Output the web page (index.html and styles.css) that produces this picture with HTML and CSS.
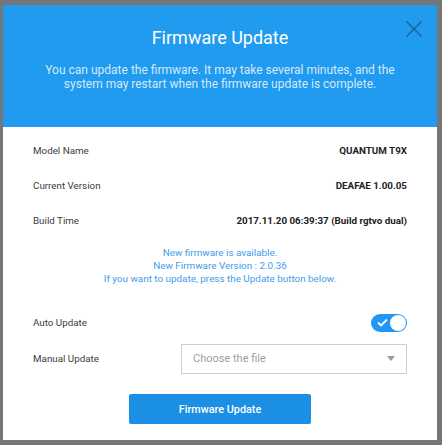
FILE: index.html
```html
<!DOCTYPE html>
<html>
<head>
<meta charset="utf-8">
<link rel="stylesheet" href="styles.css">
</head>
<body>
<div class="backdrop">
  <div class="modal">
    <div class="modal-header">
      <button class="close" aria-label="Close">
        <svg width="16" height="16" viewBox="0 0 16 16"><path d="M0.5 0.5L15.5 15.5M15.5 0.5L0.5 15.5" stroke="#1d5d8f" stroke-width="1.2" fill="none"/></svg>
      </button>
      <h1 class="title">Firmware Update</h1>
      <p class="subtitle">You can update the firmware. It may take several minutes, and the<br>system may restart when the firmware update is complete.</p>
    </div>
    <div class="modal-body">
      <div class="row"><span class="label">Model Name</span><span class="value">QUANTUM T9X</span></div>
      <div class="row"><span class="label">Current Version</span><span class="value">DEAFAE 1.00.05</span></div>
      <div class="row"><span class="label">Build Time</span><span class="value">2017.11.20 06:39:37 (Build rgtvo dual)</span></div>
      <div class="notice">
        <p>New firmware is available.</p>
        <p>New Firmware Version : 2.0.36</p>
        <p>If you want to update, press the Update button below.</p>
      </div>
      <div class="row row-ctrl"><span class="label">Auto Update</span>
        <span class="toggle"><svg class="check" width="11" height="9" viewBox="0 0 11 9"><path d="M1 4.5L4 7.5L10 1.5" stroke="#fff" stroke-width="1.8" fill="none"/></svg><span class="knob"></span></span>
      </div>
      <div class="row row-ctrl row-select"><span class="label">Manual Update</span>
        <div class="select"><span class="placeholder">Choose the file</span><span class="caret"></span></div>
      </div>
      <div class="actions"><button class="primary">Firmware Update</button></div>
    </div>
  </div>
</div>
</body>
</html>
```
FILE: styles.css
```css
* { box-sizing: border-box; }
html, body { margin: 0; padding: 0; }
body {
  width: 442px; height: 445px; overflow: hidden;
  background: #767676;
  font-family: Roboto, "Liberation Sans", sans-serif;
}
.backdrop { padding: 5px 5px 5px 3px; }
.modal {
  width: 434px; height: 435px;
  background: #fff;
  display: flex; flex-direction: column;
}
.modal-header {
  position: relative;
  height: 122px;
  background: #209bef;
  text-align: center;
  padding-top: 21px;
}
.close {
  position: absolute; top: 16px; right: 15px;
  background: none; border: 0; padding: 0; width: 16px; height: 16px;
}
.close svg { display: block; }
.title {
  margin: 0; color: #fff; font-weight: 400;
  font-size: 18px; line-height: 24px;
}
.subtitle {
  margin: 13px 0 0; color: #d3e9fc;
  font-size: 12px; line-height: 14px;
}
.modal-body { padding: 6px 30px 0; }
.row {
  display: flex; justify-content: space-between; align-items: center;
  height: 35px;
}
.label { font-size: 9.8px; color: #3c3c3c; }
.value { font-size: 9.8px; font-weight: 700; color: #222; }
.notice {
  text-align: center; color: #3f9ceb;
  font-size: 9.9px; line-height: 13px;
  padding-top: 8px; padding-bottom: 20px;
}
.notice p { margin: 0; }
.row-ctrl { height: 35px; }
.row-select { margin-top: 1px; }
.toggle {
  position: relative; width: 36px; height: 18px; border-radius: 9px;
  background: #2196f3; display: flex; align-items: center;
}
.check { margin-left: 6px; }
.knob {
  position: absolute; right: 1px; top: 1px; width: 16px; height: 16px;
  border-radius: 50%; background: #fff;
}
.select {
  width: 226px; height: 30px; border: 1px solid #cfcfcf;
  display: flex; align-items: center; justify-content: space-between;
  padding: 0 11px 0 11px;
}
.placeholder { font-size: 11px; color: #a0a0a0; }
.caret {
  width: 0; height: 0;
  border-left: 4px solid transparent; border-right: 4px solid transparent;
  border-top: 5px solid #999;
}
.actions { display: flex; justify-content: center; padding-top: 18px; }
.primary {
  width: 182px; height: 30px; border: 0; border-radius: 2px;
  background: #1a8fe3; color: #fff;
  font-family: Roboto, "Liberation Sans", sans-serif;
  font-size: 10.8px; font-weight: 500;
}
```
